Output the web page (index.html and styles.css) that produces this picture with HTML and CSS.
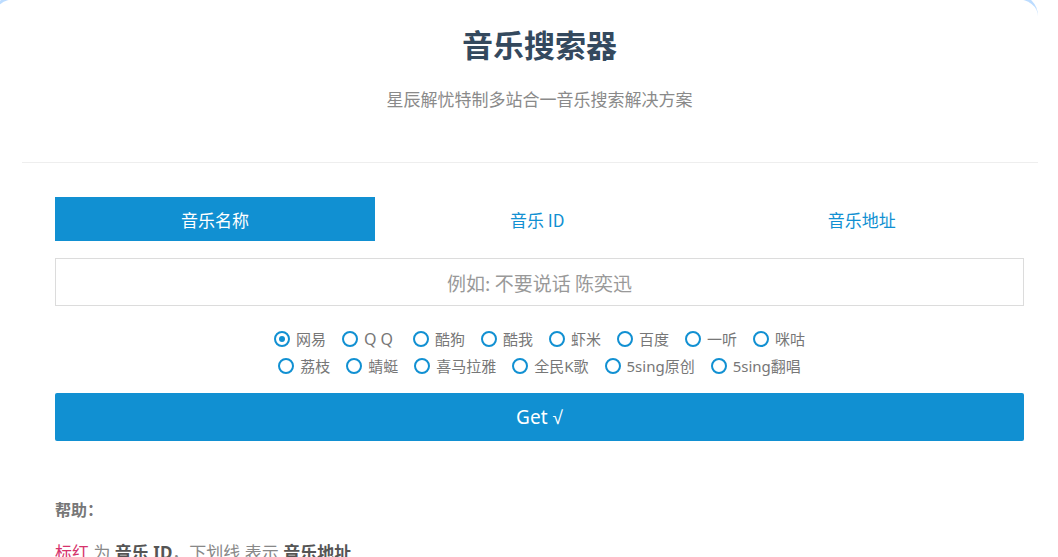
FILE: index.html
```html
<!DOCTYPE html>
<html lang="zh-CN">
<head>
<meta charset="utf-8">
<title>音乐搜索器</title>
<link rel="stylesheet" href="styles.css">
</head>
<body>
<div class="card">
  <header class="head">
    <h1 class="title">音乐搜索器</h1>
    <p class="subtitle">星辰解忧特制多站合一音乐搜索解决方案</p>
  </header>
  <div class="rule"></div>
  <main class="main">
    <nav class="tabs">
      <div class="tab active">音乐名称</div>
      <div class="tab">音乐 ID</div>
      <div class="tab">音乐地址</div>
    </nav>
    <div class="input">例如: 不要说话 陈奕迅</div>
    <div class="sources">
      <div class="row">
        <span class="opt"><i class="radio on"></i>网易</span>
        <span class="opt"><i class="radio"></i><span class="qq">QQ</span></span>
        <span class="opt"><i class="radio"></i>酷狗</span>
        <span class="opt"><i class="radio"></i>酷我</span>
        <span class="opt"><i class="radio"></i>虾米</span>
        <span class="opt"><i class="radio"></i>百度</span>
        <span class="opt"><i class="radio"></i>一听</span>
        <span class="opt"><i class="radio"></i>咪咕</span>
      </div>
      <div class="row">
        <span class="opt"><i class="radio"></i>荔枝</span>
        <span class="opt"><i class="radio"></i>蜻蜓</span>
        <span class="opt"><i class="radio"></i>喜马拉雅</span>
        <span class="opt"><i class="radio"></i>全民K歌</span>
        <span class="opt"><i class="radio"></i>5sing原创</span>
        <span class="opt"><i class="radio"></i>5sing翻唱</span>
      </div>
    </div>
    <div class="btn">Get √</div>
    <section class="help">
      <p class="help-title">帮助：</p>
      <p class="help-line"><span class="red">标红</span> 为 <b>音乐 ID</b>，<u>下划线</u> 表示 <b>音乐地址</b></p>
    </section>
  </main>
</div>
</body>
</html>
```

FILE: styles.css
```css
html, body {
  margin: 0;
  padding: 0;
  overflow: hidden;
  height: 557px;
}
body {
  background: #ffffff;
  font-family: "Noto Sans", "Noto Sans CJK SC", sans-serif;
  color: #777;
}
.card {
  width: 1044px;
  margin: -6px 0 0 -6px;
  background: #fff;
  border-top: 5px solid #bcdcff;
  border-radius: 22px;
  height: 600px;
}
.head {
  padding: 25px 14px 0 61px;
  text-align: center;
  height: 138px;
}
.title {
  margin: 0;
  font-family: "Noto Sans CJK SC", sans-serif;
  font-size: 31px;
  line-height: 40px;
  font-weight: 700;
  color: #34495e;
}
.subtitle {
  margin: 23px 0 0;
  font-family: "Noto Sans CJK SC", sans-serif;
  font-size: 17px;
  line-height: 24px;
  color: #8a8a8a;
}
.rule {
  margin-left: 28px;
  border-top: 1px solid #eeeeee;
}
.main {
  padding: 34px 14px 0 61px;
}
.tabs {
  display: flex;
  height: 44px;
}
.tab {
  flex: 1;
  display: flex;
  align-items: center;
  justify-content: center;
  font-size: 17px;
  color: #1190d2;
  font-family: "Noto Sans CJK SC", sans-serif;
}
.tab:first-child { flex: 0 0 320px; }
.tab.active {
  background: #1190d2;
  color: #fff;
}
.input {
  margin-top: 17px;
  height: 46px;
  border: 1px solid #dcdcdc;
  display: flex;
  align-items: center;
  justify-content: center;
  font-size: 19px;
  color: #999;
  font-family: "Noto Sans CJK SC", sans-serif;
}
.sources {
  margin-top: 19px;
  display: flex;
  flex-direction: column;
  align-items: center;
}
.row {
  display: flex;
  height: 27px;
  align-items: center;
}
.opt {
  display: flex;
  align-items: center;
  font-size: 15px;
  color: #777;
  margin: 0 8px;
  font-family: "Noto Sans", "Noto Sans CJK SC", sans-serif;
}
.radio {
  box-sizing: border-box;
  width: 16px;
  height: 16px;
  border: 2.5px solid #1190d2;
  border-radius: 50%;
  margin-right: 6px;
  display: flex;
  align-items: center;
  justify-content: center;
}
.radio.on::after {
  content: "";
  width: 6px;
  height: 6px;
  border-radius: 50%;
  background: #1190d2;
}
.qq { letter-spacing: 4px; font-size: 16px; }
.btn {
  margin-top: 14px;
  height: 48px;
  background: #1190d2;
  border-radius: 2px;
  color: #fff;
  font-size: 19px;
  display: flex;
  align-items: center;
  justify-content: center;
  font-family: "Noto Sans", sans-serif;
}
.help {
  margin-top: 56px;
}
.help p { margin: 0; }
.help-title {
  font-size: 16px;
  font-weight: 700;
  line-height: 24px;
  color: #777;
  font-family: "Noto Sans CJK SC", sans-serif;
}
.help-line {
  margin-top: 20px !important;
  font-size: 17px;
  line-height: 24px;
  color: #888;
  font-family: "Noto Sans", "Noto Sans CJK SC", sans-serif;
}
.help-line b { color: #555; }
.red { color: #d6336c; }
```
